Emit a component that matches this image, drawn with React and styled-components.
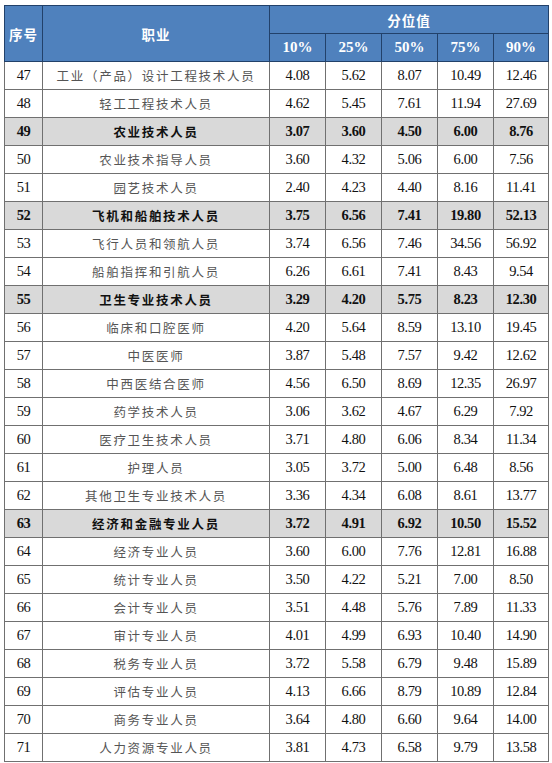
import React from 'react';
import styled, { createGlobalStyle } from 'styled-components';

const GlobalStyle = createGlobalStyle`
  html, body {
    margin: 0;
    padding: 0;
    background: #fff;
  }
`;

const Page = styled.div`
  padding: 5px 0 0 4px;
`;

const Table = styled.table`
  border-collapse: collapse;
  table-layout: fixed;
  width: 544px;
  font-family: "Liberation Serif", "Noto Sans CJK SC", serif;
`;

const HeadCell = styled.th`
  height: ${(p) => (p.$rows === 2 ? 55 : 27)}px;
  padding: 0;
  background: #4f81bd;
  color: #fff;
  border: 1px solid #22416a;
  font-family: ${(p) => (p.$num ? '"Liberation Serif", serif' : '"Noto Sans CJK SC", sans-serif')};
  font-size: ${(p) => (p.$num ? 15 : 13.5)}px;
  font-weight: bold;
  letter-spacing: ${(p) => (p.$num ? 0 : 1)}px;
  text-align: center;
  vertical-align: middle;
`;

const Row = styled.tr`
  background: ${(p) => (p.$group ? '#d9d9d9' : '#fff')};
`;

const Cell = styled.td`
  height: 27px;
  padding: 0;
  border: 1px solid #707070;
  text-align: center;
  vertical-align: middle;
  font-family: "Liberation Serif", serif;
  font-size: 14.5px;
  letter-spacing: -0.4px;
  color: #111;
  font-weight: ${(p) => (p.$group ? 'bold' : 'normal')};
`;

const NameCell = styled(Cell)`
  font-family: "Noto Sans CJK SC", sans-serif;
  font-size: 12.5px;
  letter-spacing: 1.7px;
  color: ${(p) => (p.$group ? '#111' : '#555')};
`;

const rows = [
  ['47', '工业（产品）设计工程技术人员', '4.08', '5.62', '8.07', '10.49', '12.46'],
  ['48', '轻工工程技术人员', '4.62', '5.45', '7.61', '11.94', '27.69'],
  ['49', '农业技术人员', '3.07', '3.60', '4.50', '6.00', '8.76', true],
  ['50', '农业技术指导人员', '3.60', '4.32', '5.06', '6.00', '7.56'],
  ['51', '园艺技术人员', '2.40', '4.23', '4.40', '8.16', '11.41'],
  ['52', '飞机和船舶技术人员', '3.75', '6.56', '7.41', '19.80', '52.13', true],
  ['53', '飞行人员和领航人员', '3.74', '6.56', '7.46', '34.56', '56.92'],
  ['54', '船舶指挥和引航人员', '6.26', '6.61', '7.41', '8.43', '9.54'],
  ['55', '卫生专业技术人员', '3.29', '4.20', '5.75', '8.23', '12.30', true],
  ['56', '临床和口腔医师', '4.20', '5.64', '8.59', '13.10', '19.45'],
  ['57', '中医医师', '3.87', '5.48', '7.57', '9.42', '12.62'],
  ['58', '中西医结合医师', '4.56', '6.50', '8.69', '12.35', '26.97'],
  ['59', '药学技术人员', '3.06', '3.62', '4.67', '6.29', '7.92'],
  ['60', '医疗卫生技术人员', '3.71', '4.80', '6.06', '8.34', '11.34'],
  ['61', '护理人员', '3.05', '3.72', '5.00', '6.48', '8.56'],
  ['62', '其他卫生专业技术人员', '3.36', '4.34', '6.08', '8.61', '13.77'],
  ['63', '经济和金融专业人员', '3.72', '4.91', '6.92', '10.50', '15.52', true],
  ['64', '经济专业人员', '3.60', '6.00', '7.76', '12.81', '16.88'],
  ['65', '统计专业人员', '3.50', '4.22', '5.21', '7.00', '8.50'],
  ['66', '会计专业人员', '3.51', '4.48', '5.76', '7.89', '11.33'],
  ['67', '审计专业人员', '4.01', '4.99', '6.93', '10.40', '14.90'],
  ['68', '税务专业人员', '3.72', '5.58', '6.79', '9.48', '15.89'],
  ['69', '评估专业人员', '4.13', '6.66', '8.79', '10.89', '12.84'],
  ['70', '商务专业人员', '3.64', '4.80', '6.60', '9.64', '14.00'],
  ['71', '人力资源专业人员', '3.81', '4.73', '6.58', '9.79', '13.58'],
];

const percentiles = ['10%', '25%', '50%', '75%', '90%'];

export default function App() {
  return (
    <>
      <GlobalStyle />
      <Page>
        <Table>
          <colgroup>
            <col style={{ width: 38 }} />
            <col style={{ width: 227 }} />
            <col style={{ width: 56 }} />
            <col style={{ width: 56 }} />
            <col style={{ width: 56 }} />
            <col style={{ width: 56 }} />
            <col style={{ width: 55 }} />
          </colgroup>
          <thead>
            <tr>
              <HeadCell rowSpan={2} $rows={2}>序号</HeadCell>
              <HeadCell rowSpan={2} $rows={2}>职业</HeadCell>
              <HeadCell colSpan={5}>分位值</HeadCell>
            </tr>
            <tr>
              {percentiles.map((p) => (
                <HeadCell key={p} $num>{p}</HeadCell>
              ))}
            </tr>
          </thead>
          <tbody>
            {rows.map(([no, name, a, b, c, d, e, group]) => (
              <Row key={no} $group={group}>
                <Cell $group={group}>{no}</Cell>
                <NameCell $group={group}>{name}</NameCell>
                <Cell $group={group}>{a}</Cell>
                <Cell $group={group}>{b}</Cell>
                <Cell $group={group}>{c}</Cell>
                <Cell $group={group}>{d}</Cell>
                <Cell $group={group}>{e}</Cell>
              </Row>
            ))}
          </tbody>
        </Table>
      </Page>
    </>
  );
}
